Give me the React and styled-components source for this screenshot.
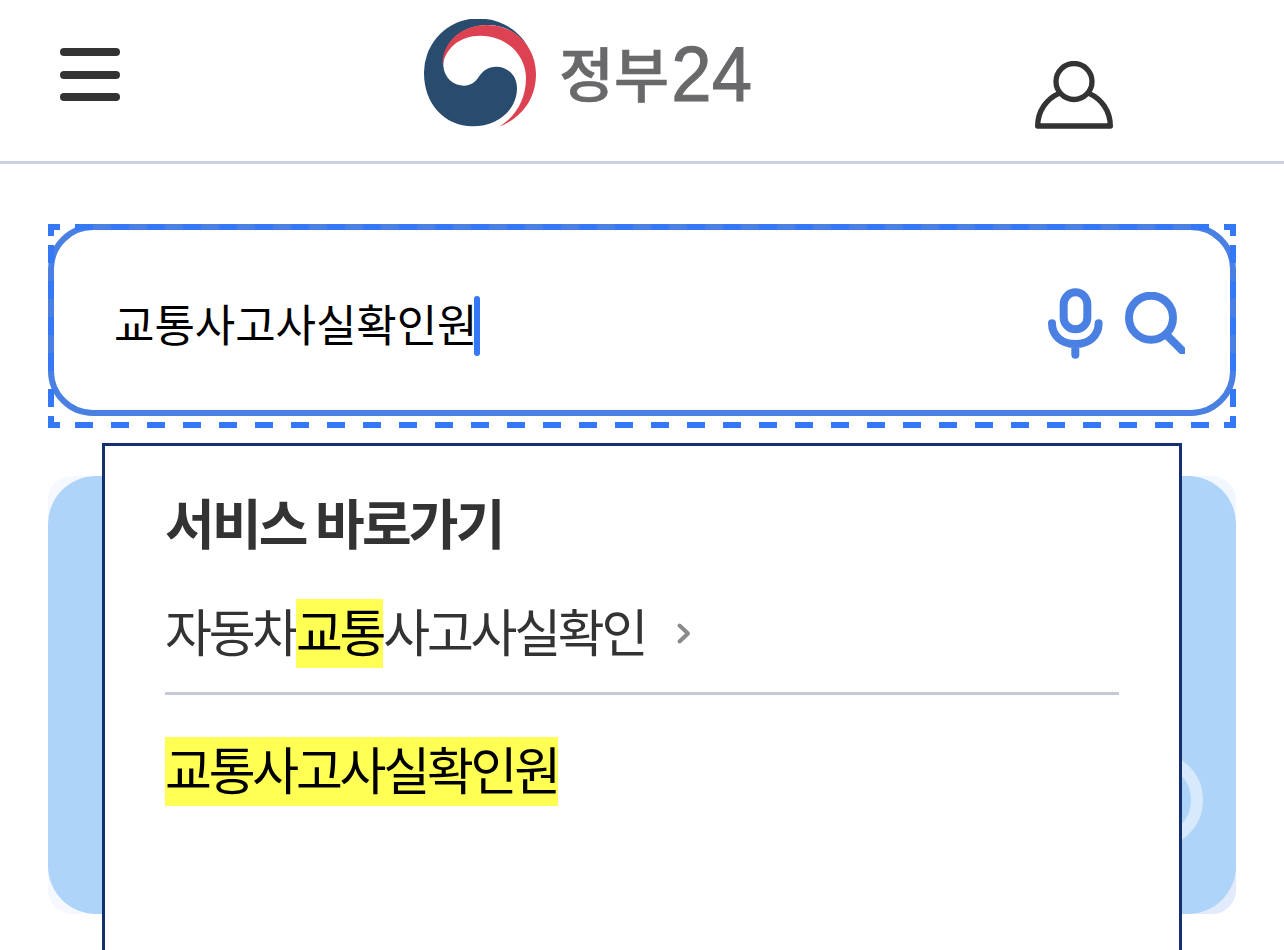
import React from 'react'
import styled, { createGlobalStyle } from "styled-components";

const GlobalStyle = createGlobalStyle`
* { box-sizing: border-box; }
body {
margin: 0;
background-color: #fff;
color: #333;
font-family: "Noto Sans CJK KR", sans-serif;
overflow: hidden;
}
`

const Page = styled.div`
width: 1284px;
height: 950px;
overflow: hidden;
`

const Header = styled.header`
display: flex;
align-items: flex-start;
justify-content: space-between;
height: 164px;
padding: 19px 171px 0 60px;
border-bottom: 3px solid #cdd1de;
`

const MenuButton = styled.button`
display: flex;
flex-direction: column;
justify-content: space-between;
width: 60px;
height: 53px;
margin-top: 29px;
padding: 0;
border: none;
background-color: transparent;
`

const Bar = styled.span`
display: block;
height: 8px;
border-radius: 4px;
background-color: #333;
`

const Icon = styled.svg`
display: block;
flex: none;
fill: none;
stroke: ${props => props.$color || "#333"};
stroke-linecap: round;
stroke-linejoin: round;
`

const LogoArt = styled.svg`
display: block;
margin-left: 23px;
`

const LogoText = styled.text`
font-family: ${props => props.$latin ? '"Liberation Sans", sans-serif' : '"Noto Sans CJK KR", sans-serif'};
font-size: ${props => props.$size}px;
font-weight: ${props => props.$latin ? 400 : 500};
fill: #69696b;
stroke: #69696b;
stroke-width: ${props => props.$latin ? 3 : 2};
`

const UserButton = styled.div`
margin-top: 42px;
`

const Main = styled.main`
padding: 60px 48px 0;
`

const SearchArea = styled.div`
position: relative;
height: 204px;
`

const SearchBox = styled.div`
display: flex;
align-items: center;
height: 192px;
padding: 0 45px 0 60px;
border: 6px solid #4a80e2;
border-radius: 45px;
`

const Query = styled.div`
flex: 1;
display: flex;
align-items: center;
padding-top: 12px;
font-size: 44px;
line-height: 60px;
letter-spacing: -0.1px;
color: #000;
white-space: nowrap;
`

const QueryText = styled.span`
width: 360px;
padding-bottom: 7px;
line-height: 54px;
`

const Caret = styled.span`
width: 6px;
height: 60px;
border-radius: 3px;
background-color: #3478f6;
`

const SearchIcons = styled.div`
display: flex;
align-items: center;
gap: 22px;
padding-top: 7px;
`

const SearchIcon = styled(Icon)`
margin-bottom: 2px;
`

/* focus ring: dashes of 18px, short corner pieces */
const FocusRing = styled.div`
position: absolute;
inset: 0;
display: grid;
grid-template-columns: 12px 1fr 12px;
grid-template-rows: 12px 1fr 12px;
pointer-events: none;
`

const Corner = styled.span`
border: 0 solid #3478f6;
border-width: ${props => props.$edges};
`

const DashRow = styled.span`
margin: 0 15px;
height: 6px;
align-self: ${props => props.$align};
background: repeating-linear-gradient(90deg, #3478f6 0 18px, transparent 18px 36px);
`

const DashColumn = styled.span`
margin: 9px 0;
width: 6px;
justify-self: ${props => props.$align};
background: repeating-linear-gradient(180deg, #3478f6 0 18px, transparent 18px 36px);
`

const Banner = styled.section`
height: 438px;
margin-top: 48px;
border-radius: 24px;
background: linear-gradient(135deg, #f5f8ff 70%, #e1ebfb 92%);
overflow: hidden;
`

const BannerSlide = styled.div`
position: relative;
height: 100%;
border-radius: 48px;
background-color: #aed4f9;
`

const Ring = styled.span`
position: absolute;
right: 33px;
bottom: 66px;
width: 96px;
height: 96px;
border: 12px solid #d7eafc;
border-radius: 50%;
`

const Suggest = styled.div`
position: absolute;
top: 219px;
left: 54px;
z-index: 1;
width: 1080px;
height: 560px;
padding: 0 60px;
border: 3px solid #15306f;
background-color: #fff;
`

const SuggestTitle = styled.h2`
margin: 36px 0 0;
height: 82px;
font-size: 54px;
font-weight: 700;
line-height: 80px;
letter-spacing: -2.8px;
white-space: nowrap;
`

const SuggestRow = styled.div`
display: flex;
align-items: center;
height: ${props => props.$divided ? "131px" : "153px"};
padding-top: ${props => props.$divided ? "10px" : "0"};
border-bottom: ${props => props.$divided ? "3px solid #c5cad9" : "none"};
font-size: 51px;
letter-spacing: -3.27px;
white-space: nowrap;
`

const Part = styled.span`
height: 69px;
padding-bottom: 6px;
line-height: 63px;
`

const Mark = styled(Part)`
color: #000;
background-color: #ffff54;
`

const Chevron = styled(Icon)`
margin-left: 31px;
`

const Logo = () => (
  <LogoArt width="330" height="108" viewBox="42 42 990 324">
    <path fill="#284b6e" d="M100 182C98 116 150 61 232 60C286 60 326 85 356 128C328 78 280 48 228 42H180A163 163 0 0 0 42 205C42 297 104 364 188 364C263 364 321 315 321 249C321 211 293 185 258 185C236 185 218 197 208 213C196 233 181 242 162 242C130 242 102 217 100 182Z" />
    <path fill="#dd4252" d="M98 182C94 116 150 60 232 60C322 61 378 131 378 207C378 277 340 337 267 365C318 336 348 281 348 220C348 148 287 92 211 92C149 92 106 130 98 182Z" />
    <LogoText x="447" y="275" $size="178" textLength="330" lengthAdjust="spacingAndGlyphs">정부</LogoText>
    <LogoText x="784" y="289" $size="232" $latin textLength="242" lengthAdjust="spacingAndGlyphs">24</LogoText>
  </LogoArt>
)

const App = () => {
  return (
    <Page>
      <GlobalStyle />
      <Header>
        <MenuButton aria-label="메뉴">
          <Bar />
          <Bar />
          <Bar />
        </MenuButton>
        <Logo />
        <UserButton>
          <Icon width="78" height="68" viewBox="45 33 234 204" strokeWidth="16">
            <circle cx="162" cy="94.5" r="54" />
            <path d="M117 130C79 147 53 184 53 228H271C271 184 245 147 207 130" />
          </Icon>
        </UserButton>
      </Header>
      <Main>
        <SearchArea>
          <SearchBox>
            <Query>
              <QueryText>교통사고사실확인원</QueryText>
              <Caret />
            </Query>
            <SearchIcons>
              <Icon $color="#4a80e2" width="55" height="71" viewBox="83 221 165 213" strokeWidth="24">
                <rect x="130" y="234" width="71" height="111" rx="35.5" />
                <path d="M95 327C95 365 125 389 165 389S235 365 235 327M165 389V421" />
              </Icon>
              <SearchIcon $color="#4a80e2" width="60" height="62" viewBox="315 231 180 186" strokeWidth="24">
                <circle cx="393" cy="308" r="66" />
                <path d="M441 361L487 407" />
              </SearchIcon>
            </SearchIcons>
          </SearchBox>
          <FocusRing>
            <Corner $edges="6px 0 0 6px" />
            <DashRow $align="start" />
            <Corner $edges="6px 6px 0 0" />
            <DashColumn $align="start" />
            <span />
            <DashColumn $align="end" />
            <Corner $edges="0 0 6px 6px" />
            <DashRow $align="end" />
            <Corner $edges="0 6px 6px 0" />
          </FocusRing>
          <Suggest>
            <SuggestTitle>서비스 바로가기</SuggestTitle>
            <SuggestRow $divided>
              <Part>자동차</Part>
              <Mark>교통</Mark>
              <Part>사고사실확인</Part>
              <Chevron $color="#8a8a8a" width="16" height="24" viewBox="0 0 16 24" strokeWidth="4">
                <path d="M3.5 4.5L12 12.5L3.5 20.5" />
              </Chevron>
            </SuggestRow>
            <SuggestRow>
              <Mark>교통사고사실확인원</Mark>
            </SuggestRow>
          </Suggest>
        </SearchArea>
        <Banner>
          <BannerSlide>
            <Ring />
          </BannerSlide>
        </Banner>
      </Main>
    </Page>
  )
}

export default App
